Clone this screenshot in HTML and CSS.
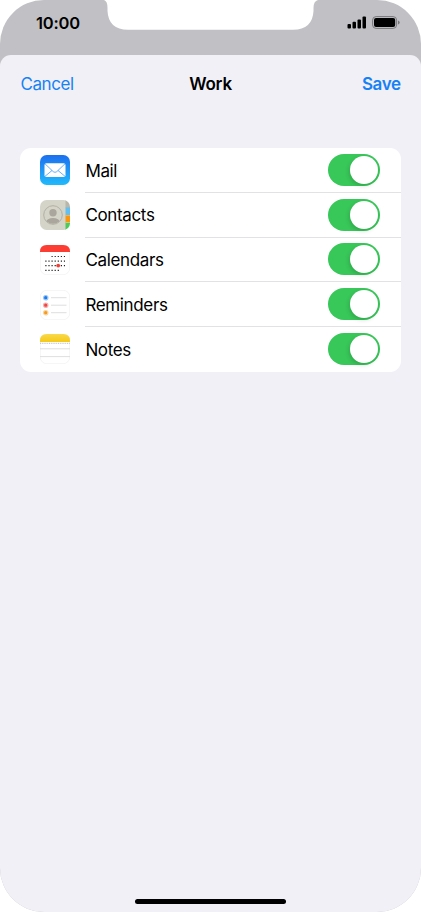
FILE: index.html
```
<!DOCTYPE html>
<html lang="en">
<head>
<meta charset="utf-8">
<title>Work</title>
<link rel="stylesheet" href="styles.css">
</head>
<body>
<main class="phone">
  <header class="status">
    <svg class="notch" width="220" height="31" viewBox="0 0 220 31"><path d="M0 0H4Q7.500 1 7.500 8V11Q8.500 29.700 28 29.700H193Q212.500 29.700 213.500 11V8Q213.500 1 218 0Z" fill="#fff"/></svg>
    <time class="clock">10:00</time>
    <svg class="indicators" width="54" height="16" viewBox="0 0 54 16">
      <rect x=".5" y="9" width="3.500" height="4.600" rx="1"/>
      <rect x="5.500" y="6.800" width="3.500" height="6.800" rx="1"/>
      <rect x="10.500" y="4.500" width="3.500" height="9.100" rx="1"/>
      <rect x="15.500" y="1.500" width="3.500" height="12.100" rx="1"/>
      <rect x="25.600" y="1.600" width="24" height="11.800" rx="3.500" fill="none" stroke="#77777a"/>
      <rect x="27" y="3" width="21.200" height="9" rx="2"/>
      <path d="M51 5.500Q52.700 6 52.700 7.500T51 9.500Z" fill="#77777a"/>
    </svg>
  </header>
  <section class="sheet">
    <nav class="nav">
      <a class="action">Cancel</a>
      <h1 class="title">Work</h1>
      <a class="action save">Save</a>
    </nav>
    <ul class="list">
      <li class="row">
        <svg class="icon" viewBox="0 0 30 30">
          <defs><linearGradient id="sky" x2="0" y2="1"><stop stop-color="#1d70ee"/><stop offset="1" stop-color="#20bafb"/></linearGradient></defs>
          <rect width="30" height="30" rx="6.700" fill="url(#sky)"/>
          <rect x="4.500" y="8.200" width="21" height="13.700" rx="1.700" fill="#fff"/>
          <path d="M5 8.800L13.300 16.700Q15 18 16.700 16.700L25 8.800M5 21.300L12 15.500M25 21.300L18 15.500" fill="none" stroke="#3f9cf5" stroke-width=".8"/>
        </svg>
        <div class="cell"><span class="label">Mail</span><span class="toggle"></span></div>
      </li>
      <li class="row">
        <svg class="icon" viewBox="0 0 30 30">
          <defs><clipPath id="book"><rect width="30" height="30" rx="6.700"/></clipPath><clipPath id="face"><circle cx="13" cy="15" r="8.700"/></clipPath></defs>
          <g clip-path="url(#book)">
            <path fill="#d5d4c9" d="M0 0H26V30H0Z"/><path fill="#b9b6ac" d="M25.500 0H30V8H25.500Z"/>
            <path fill="#63bff0" d="M25.500 7.500H30V15H25.500Z"/><path fill="#fb9610" d="M25.500 15.300H30V22.500H25.500Z"/><path fill="#4ccb5b" d="M25.500 22.800H30V30H25.500Z"/>
          </g>
          <circle cx="13" cy="15" r="9.300" fill="none" stroke="#aaa69d" stroke-width=".8"/>
          <g clip-path="url(#face)" fill="#aaa69d"><circle cx="13" cy="12.700" r="3.700"/><ellipse cx="13" cy="22" rx="7" ry="4"/></g>
        </svg>
        <div class="cell"><span class="label">Contacts</span><span class="toggle"></span></div>
      </li>
      <li class="row">
        <svg class="icon" viewBox="0 0 30 30">
          <rect x=".3" y=".3" width="29.400" height="29.400" rx="6.500" fill="#fff" stroke="#ececed" stroke-width=".6"/>
          <path d="M0 7V6.700Q0 0 6.700 0H23.300Q30 0 30 6.700V7Z" fill="#fb3d33"/>
          <g fill="none" stroke="#222" stroke-width="1.200" stroke-dasharray="1.200 1.900"><path d="M11.500 11.500H25M5.300 16.200H25M5.300 20.700H25M5.300 25.300H19"/></g>
          <circle cx="18.200" cy="20.600" r="1.900" fill="#ee4039"/>
        </svg>
        <div class="cell"><span class="label">Calendars</span><span class="toggle"></span></div>
      </li>
      <li class="row">
        <svg class="icon" viewBox="0 0 30 30">
          <rect x=".3" y=".3" width="29.400" height="29.400" rx="6.500" fill="#fff" stroke="#ececed" stroke-width=".6"/>
          <path d="M11 7.700H26.500M11 15.200H26.500M11 22.700H26.500" stroke="#dadadc" stroke-width=".9"/>
          <g stroke-width="1.200"><circle cx="5.700" cy="7.700" r="2.200" fill="#1b7bed" stroke="#9bc7f7"/><circle cx="5.700" cy="15.200" r="2.200" fill="#ed4745" stroke="#f8b0ae"/><circle cx="5.700" cy="22.700" r="2.200" fill="#f49a1e" stroke="#fbd59e"/></g>
        </svg>
        <div class="cell"><span class="label">Reminders</span><span class="toggle"></span></div>
      </li>
      <li class="row">
        <svg class="icon" viewBox="0 0 30 30">
          <defs><linearGradient id="pad" x2="0" y2="1"><stop stop-color="#f9d94c"/><stop offset="1" stop-color="#f5c917"/></linearGradient></defs>
          <rect x=".3" y=".3" width="29.400" height="29.400" rx="6.500" fill="#fff" stroke="#ececed" stroke-width=".6"/>
          <path d="M0 8V6.700Q0 0 6.700 0H23.300Q30 0 30 6.700V8Z" fill="url(#pad)"/>
          <path d="M0 9.300H30" stroke="#aaa" stroke-width=".8" stroke-dasharray="1 .8"/>
          <path d="M0 14.800H30M0 22.600H30" stroke="#d5d5d7" stroke-width=".8"/>
        </svg>
        <div class="cell"><span class="label">Notes</span><span class="toggle"></span></div>
      </li>
    </ul>
    <div class="home"></div>
  </section>
</main>
</body>
</html>
```
FILE: styles.css
```
* { box-sizing: border-box; }
body {
  margin: 0;
  background: #fff;
  font-family: Inter, "Liberation Sans", sans-serif;
  color: #000;
}
.phone {
  display: flex;
  flex-direction: column;
  height: 912px;
  overflow: hidden;
  border-radius: 44px;
  background: #c1c0c5;
}
.status {
  position: relative;
  display: flex;
  justify-content: space-between;
  align-items: flex-start;
  height: 55px;
  padding: 13px 20px 0 36px;
}
.notch { position: absolute; left: 100px; top: 0; }
.clock {
  font-size: 16.5px;
  line-height: 21px;
  font-weight: 600;
  letter-spacing: -.2px;
}
.indicators { margin-top: 2px; }
.sheet {
  display: flex;
  flex: 1;
  flex-direction: column;
  padding: 0 20.400px 8px;
  border-radius: 11px 11px 0 0;
  background: #f1f0f6;
}
.nav {
  display: grid;
  grid-template-columns: 1fr auto 1fr;
  align-items: center;
  height: 58px;
  margin-bottom: 35px;
}
.action { color: #1681f5; font-size: 17px; letter-spacing: -.4px; }
.save { justify-self: end; font-weight: 600; }
.title { margin: 0; font-size: 17px; font-weight: 600; letter-spacing: -.2px; }
.list {
  margin: 0;
  padding: 0;
  list-style: none;
  border-radius: 11px;
  background: #fff;
}
.row {
  display: flex;
  align-items: center;
  height: 44.750px;
  padding-left: 20px;
}
.icon { flex: none; width: 30px; height: 30px; margin-right: 15px; }
.cell {
  display: flex;
  flex: 1;
  align-items: center;
  justify-content: space-between;
  height: 100%;
  padding-right: 20.300px;
  border-bottom: 1px solid #e2e2e4;
}
.row:last-child .cell { border-bottom-color: transparent; }
.label { padding-top: 1.500px; font-size: 17px; letter-spacing: -.35px; }
.toggle {
  display: flex;
  justify-content: flex-end;
  width: 52px;
  height: 32px;
  padding: 2px;
  border-radius: 16px;
  background: #38c759;
}
.toggle::after {
  content: "";
  width: 28px;
  height: 28px;
  border-radius: 50%;
  background: #fff;
  box-shadow: -1px 2px 4px rgba(0, 0, 0, .15);
}
.home {
  align-self: center;
  width: 151px;
  height: 5.500px;
  margin-top: auto;
  border-radius: 3px;
  background: #000;
}
```
